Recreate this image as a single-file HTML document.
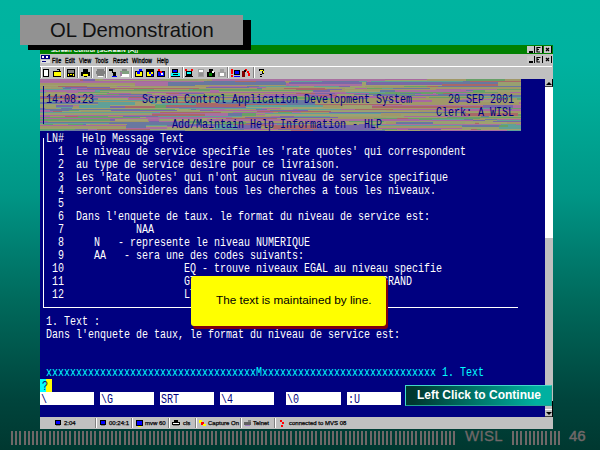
<!DOCTYPE html><html><head><meta charset="utf-8"><style>
*{margin:0;padding:0;box-sizing:border-box}
html,body{width:600px;height:450px;overflow:hidden}
body{position:relative;background:linear-gradient(180deg,#00b4a0 0px,#00b2a0 60px,#00ac98 100px,#009686 194px,#007e70 250px,#006a5c 300px,#00443c 400px,#003830 450px);font-family:"Liberation Sans",sans-serif}
.a{position:absolute}
.t{position:absolute;font:12px/12px "Liberation Mono",monospace;white-space:pre;transform:scale(0.8333,1.0);transform-origin:0 0}
</style></head><body>

<div class="a" style="left:40px;top:45px;width:513px;height:384px;background:#c0c0c0"></div>
<div class="a" style="left:40px;top:45px;width:513px;height:9px;background:#008000"></div>
<div class="a" style="left:40px;top:66px;width:512px;height:1px;background:#fff"></div>
<div class="a" style="left:40px;top:79px;width:505px;height:338px;background:#000080"></div>
<svg style="position:absolute;left:40px;top:79px" width="481" height="52"><rect x="0" y="0" width="40" height="1" fill="#a870a0"/><rect x="40" y="0" width="3" height="1" fill="#a86868"/><rect x="43" y="0" width="12" height="1" fill="#7868a8"/><rect x="55" y="0" width="4" height="1" fill="#a09868"/><rect x="59" y="0" width="4" height="1" fill="#98a070"/><rect x="63" y="0" width="58" height="1" fill="#a870a0"/><rect x="121" y="0" width="37" height="1" fill="#98a070"/><rect x="158" y="0" width="9" height="1" fill="#a0a070"/><rect x="167" y="0" width="5" height="1" fill="#a0a070"/><rect x="172" y="0" width="69" height="1" fill="#a870a0"/><rect x="241" y="0" width="104" height="1" fill="#a870a0"/><rect x="345" y="0" width="42" height="1" fill="#a868a0"/><rect x="387" y="0" width="12" height="1" fill="#a09868"/><rect x="399" y="0" width="27" height="1" fill="#a09868"/><rect x="426" y="0" width="39" height="1" fill="#68a068"/><rect x="465" y="0" width="16" height="1" fill="#a09868"/><rect x="0" y="1" width="40" height="1" fill="#a870a0"/><rect x="40" y="1" width="3" height="1" fill="#a86868"/><rect x="43" y="1" width="12" height="1" fill="#7868a8"/><rect x="55" y="1" width="4" height="1" fill="#a09868"/><rect x="59" y="1" width="4" height="1" fill="#98a070"/><rect x="63" y="1" width="58" height="1" fill="#a0a070"/><rect x="121" y="1" width="37" height="1" fill="#98a070"/><rect x="158" y="1" width="9" height="1" fill="#a0a070"/><rect x="167" y="1" width="5" height="1" fill="#a09868"/><rect x="172" y="1" width="69" height="1" fill="#a870a0"/><rect x="241" y="1" width="104" height="1" fill="#a870a0"/><rect x="345" y="1" width="42" height="1" fill="#a0a070"/><rect x="387" y="1" width="12" height="1" fill="#a09868"/><rect x="399" y="1" width="27" height="1" fill="#a09868"/><rect x="426" y="1" width="39" height="1" fill="#68a068"/><rect x="465" y="1" width="16" height="1" fill="#a09868"/><rect x="0" y="2" width="12" height="1" fill="#a868a0"/><rect x="12" y="2" width="119" height="1" fill="#a868a0"/><rect x="131" y="2" width="33" height="1" fill="#a870a0"/><rect x="164" y="2" width="31" height="1" fill="#6878a0"/><rect x="195" y="2" width="21" height="1" fill="#a86868"/><rect x="216" y="2" width="29" height="1" fill="#7868a8"/><rect x="245" y="2" width="6" height="1" fill="#a09868"/><rect x="251" y="2" width="9" height="1" fill="#60a098"/><rect x="260" y="2" width="22" height="1" fill="#60a098"/><rect x="282" y="2" width="37" height="1" fill="#6878a0"/><rect x="319" y="2" width="8" height="1" fill="#60a098"/><rect x="327" y="2" width="4" height="1" fill="#a870a0"/><rect x="331" y="2" width="92" height="1" fill="#60a098"/><rect x="423" y="2" width="7" height="1" fill="#6878a0"/><rect x="430" y="2" width="51" height="1" fill="#a86868"/><rect x="0" y="3" width="95" height="1" fill="#a870a0"/><rect x="95" y="3" width="33" height="1" fill="#a870a0"/><rect x="128" y="3" width="27" height="1" fill="#6878a0"/><rect x="155" y="3" width="91" height="1" fill="#6878a0"/><rect x="246" y="3" width="3" height="1" fill="#a09868"/><rect x="249" y="3" width="73" height="1" fill="#7868a8"/><rect x="322" y="3" width="4" height="1" fill="#a0a070"/><rect x="326" y="3" width="76" height="1" fill="#7868a8"/><rect x="402" y="3" width="56" height="1" fill="#6878a0"/><rect x="458" y="3" width="23" height="1" fill="#98a070"/><rect x="0" y="4" width="95" height="1" fill="#a09868"/><rect x="95" y="4" width="33" height="1" fill="#a870a0"/><rect x="128" y="4" width="27" height="1" fill="#6878a0"/><rect x="155" y="4" width="91" height="1" fill="#6878a0"/><rect x="246" y="4" width="3" height="1" fill="#a868a0"/><rect x="249" y="4" width="73" height="1" fill="#7868a8"/><rect x="322" y="4" width="4" height="1" fill="#a0a070"/><rect x="326" y="4" width="76" height="1" fill="#7868a8"/><rect x="402" y="4" width="56" height="1" fill="#6878a0"/><rect x="458" y="4" width="23" height="1" fill="#98a070"/><rect x="0" y="5" width="95" height="1" fill="#a09868"/><rect x="95" y="5" width="33" height="1" fill="#a870a0"/><rect x="128" y="5" width="27" height="1" fill="#6878a0"/><rect x="155" y="5" width="91" height="1" fill="#6878a0"/><rect x="246" y="5" width="3" height="1" fill="#a868a0"/><rect x="249" y="5" width="73" height="1" fill="#a870a0"/><rect x="322" y="5" width="4" height="1" fill="#a0a070"/><rect x="326" y="5" width="76" height="1" fill="#7868a8"/><rect x="402" y="5" width="56" height="1" fill="#a86868"/><rect x="458" y="5" width="23" height="1" fill="#98a070"/><rect x="0" y="6" width="95" height="1" fill="#a0a070"/><rect x="95" y="6" width="33" height="1" fill="#a870a0"/><rect x="128" y="6" width="27" height="1" fill="#6878a0"/><rect x="155" y="6" width="91" height="1" fill="#a09868"/><rect x="246" y="6" width="3" height="1" fill="#a868a0"/><rect x="249" y="6" width="73" height="1" fill="#a870a0"/><rect x="322" y="6" width="4" height="1" fill="#a0a070"/><rect x="326" y="6" width="76" height="1" fill="#a0a070"/><rect x="402" y="6" width="56" height="1" fill="#a86868"/><rect x="458" y="6" width="23" height="1" fill="#98a070"/><rect x="0" y="7" width="18" height="1" fill="#a09868"/><rect x="18" y="7" width="29" height="1" fill="#a86868"/><rect x="47" y="7" width="8" height="1" fill="#a09868"/><rect x="55" y="7" width="10" height="1" fill="#a09868"/><rect x="65" y="7" width="12" height="1" fill="#a09868"/><rect x="77" y="7" width="13" height="1" fill="#a870a0"/><rect x="90" y="7" width="79" height="1" fill="#a09868"/><rect x="169" y="7" width="38" height="1" fill="#a870a0"/><rect x="207" y="7" width="12" height="1" fill="#6878a0"/><rect x="219" y="7" width="40" height="1" fill="#60a098"/><rect x="259" y="7" width="5" height="1" fill="#98a070"/><rect x="264" y="7" width="10" height="1" fill="#98a070"/><rect x="274" y="7" width="25" height="1" fill="#60a098"/><rect x="299" y="7" width="11" height="1" fill="#7868a8"/><rect x="310" y="7" width="15" height="1" fill="#a0a070"/><rect x="325" y="7" width="39" height="1" fill="#a09868"/><rect x="364" y="7" width="6" height="1" fill="#68a068"/><rect x="370" y="7" width="17" height="1" fill="#68a068"/><rect x="387" y="7" width="11" height="1" fill="#a86868"/><rect x="398" y="7" width="83" height="1" fill="#6878a0"/><rect x="0" y="8" width="11" height="1" fill="#a0a070"/><rect x="11" y="8" width="11" height="1" fill="#98a070"/><rect x="22" y="8" width="3" height="1" fill="#60a098"/><rect x="25" y="8" width="45" height="1" fill="#7868a8"/><rect x="70" y="8" width="96" height="1" fill="#a0a070"/><rect x="166" y="8" width="43" height="1" fill="#7868a8"/><rect x="209" y="8" width="6" height="1" fill="#a868a0"/><rect x="215" y="8" width="11" height="1" fill="#a868a0"/><rect x="226" y="8" width="108" height="1" fill="#98a070"/><rect x="334" y="8" width="16" height="1" fill="#a09868"/><rect x="350" y="8" width="91" height="1" fill="#a09868"/><rect x="441" y="8" width="40" height="1" fill="#a09868"/><rect x="0" y="9" width="23" height="1" fill="#a09868"/><rect x="23" y="9" width="8" height="1" fill="#6878a0"/><rect x="31" y="9" width="16" height="1" fill="#a868a0"/><rect x="47" y="9" width="112" height="1" fill="#a86868"/><rect x="159" y="9" width="18" height="1" fill="#a09868"/><rect x="177" y="9" width="40" height="1" fill="#a09868"/><rect x="217" y="9" width="5" height="1" fill="#6878a0"/><rect x="222" y="9" width="22" height="1" fill="#a09868"/><rect x="244" y="9" width="41" height="1" fill="#a86868"/><rect x="285" y="9" width="20" height="1" fill="#a09868"/><rect x="305" y="9" width="10" height="1" fill="#a0a070"/><rect x="315" y="9" width="12" height="1" fill="#a868a0"/><rect x="327" y="9" width="15" height="1" fill="#68a068"/><rect x="342" y="9" width="11" height="1" fill="#60a098"/><rect x="353" y="9" width="37" height="1" fill="#6878a0"/><rect x="390" y="9" width="91" height="1" fill="#a09868"/><rect x="0" y="10" width="37" height="1" fill="#60a098"/><rect x="37" y="10" width="38" height="1" fill="#7868a8"/><rect x="75" y="10" width="13" height="1" fill="#98a070"/><rect x="88" y="10" width="6" height="1" fill="#a09868"/><rect x="94" y="10" width="20" height="1" fill="#68a068"/><rect x="114" y="10" width="35" height="1" fill="#a09868"/><rect x="149" y="10" width="4" height="1" fill="#60a098"/><rect x="153" y="10" width="69" height="1" fill="#68a068"/><rect x="222" y="10" width="34" height="1" fill="#a09868"/><rect x="256" y="10" width="31" height="1" fill="#a86868"/><rect x="287" y="10" width="15" height="1" fill="#7868a8"/><rect x="302" y="10" width="94" height="1" fill="#a09868"/><rect x="396" y="10" width="25" height="1" fill="#a868a0"/><rect x="421" y="10" width="36" height="1" fill="#a870a0"/><rect x="457" y="10" width="24" height="1" fill="#68a068"/><rect x="0" y="11" width="55" height="1" fill="#a870a0"/><rect x="55" y="11" width="5" height="1" fill="#60a098"/><rect x="60" y="11" width="110" height="1" fill="#68a068"/><rect x="170" y="11" width="9" height="1" fill="#a870a0"/><rect x="179" y="11" width="94" height="1" fill="#68a068"/><rect x="273" y="11" width="17" height="1" fill="#7868a8"/><rect x="290" y="11" width="15" height="1" fill="#a09868"/><rect x="305" y="11" width="18" height="1" fill="#a0a070"/><rect x="323" y="11" width="17" height="1" fill="#a09868"/><rect x="340" y="11" width="15" height="1" fill="#6878a0"/><rect x="355" y="11" width="65" height="1" fill="#a870a0"/><rect x="420" y="11" width="6" height="1" fill="#a868a0"/><rect x="426" y="11" width="7" height="1" fill="#6878a0"/><rect x="433" y="11" width="12" height="1" fill="#68a068"/><rect x="445" y="11" width="7" height="1" fill="#98a070"/><rect x="452" y="11" width="29" height="1" fill="#98a070"/><rect x="0" y="12" width="55" height="1" fill="#a870a0"/><rect x="55" y="12" width="5" height="1" fill="#60a098"/><rect x="60" y="12" width="110" height="1" fill="#98a070"/><rect x="170" y="12" width="9" height="1" fill="#a870a0"/><rect x="179" y="12" width="94" height="1" fill="#a0a070"/><rect x="273" y="12" width="17" height="1" fill="#7868a8"/><rect x="290" y="12" width="15" height="1" fill="#a09868"/><rect x="305" y="12" width="18" height="1" fill="#a0a070"/><rect x="323" y="12" width="17" height="1" fill="#a0a070"/><rect x="340" y="12" width="15" height="1" fill="#6878a0"/><rect x="355" y="12" width="65" height="1" fill="#a870a0"/><rect x="420" y="12" width="6" height="1" fill="#a868a0"/><rect x="426" y="12" width="7" height="1" fill="#a870a0"/><rect x="433" y="12" width="12" height="1" fill="#68a068"/><rect x="445" y="12" width="7" height="1" fill="#98a070"/><rect x="452" y="12" width="29" height="1" fill="#98a070"/><rect x="0" y="13" width="6" height="1" fill="#60a098"/><rect x="6" y="13" width="21" height="1" fill="#a09868"/><rect x="27" y="13" width="11" height="1" fill="#a870a0"/><rect x="38" y="13" width="31" height="1" fill="#68a068"/><rect x="69" y="13" width="38" height="1" fill="#a0a070"/><rect x="107" y="13" width="114" height="1" fill="#a868a0"/><rect x="221" y="13" width="33" height="1" fill="#a868a0"/><rect x="254" y="13" width="7" height="1" fill="#a870a0"/><rect x="261" y="13" width="10" height="1" fill="#a09868"/><rect x="271" y="13" width="35" height="1" fill="#a870a0"/><rect x="306" y="13" width="39" height="1" fill="#60a098"/><rect x="345" y="13" width="113" height="1" fill="#68a068"/><rect x="458" y="13" width="12" height="1" fill="#a09868"/><rect x="470" y="13" width="11" height="1" fill="#a868a0"/><rect x="0" y="14" width="67" height="1" fill="#a0a070"/><rect x="67" y="14" width="24" height="1" fill="#a868a0"/><rect x="91" y="14" width="11" height="1" fill="#a09868"/><rect x="102" y="14" width="3" height="1" fill="#a0a070"/><rect x="105" y="14" width="10" height="1" fill="#a09868"/><rect x="115" y="14" width="4" height="1" fill="#a0a070"/><rect x="119" y="14" width="7" height="1" fill="#98a070"/><rect x="126" y="14" width="13" height="1" fill="#a86868"/><rect x="139" y="14" width="25" height="1" fill="#7868a8"/><rect x="164" y="14" width="92" height="1" fill="#a09868"/><rect x="256" y="14" width="19" height="1" fill="#a86868"/><rect x="275" y="14" width="20" height="1" fill="#7868a8"/><rect x="295" y="14" width="34" height="1" fill="#a868a0"/><rect x="329" y="14" width="31" height="1" fill="#68a068"/><rect x="360" y="14" width="21" height="1" fill="#6878a0"/><rect x="381" y="14" width="12" height="1" fill="#68a068"/><rect x="393" y="14" width="3" height="1" fill="#a870a0"/><rect x="396" y="14" width="7" height="1" fill="#68a068"/><rect x="403" y="14" width="9" height="1" fill="#a86868"/><rect x="412" y="14" width="15" height="1" fill="#a870a0"/><rect x="427" y="14" width="54" height="1" fill="#a09868"/><rect x="0" y="15" width="39" height="1" fill="#98a070"/><rect x="39" y="15" width="14" height="1" fill="#a09868"/><rect x="53" y="15" width="3" height="1" fill="#60a098"/><rect x="56" y="15" width="23" height="1" fill="#68a068"/><rect x="79" y="15" width="33" height="1" fill="#6878a0"/><rect x="112" y="15" width="17" height="1" fill="#a0a070"/><rect x="129" y="15" width="13" height="1" fill="#a870a0"/><rect x="142" y="15" width="56" height="1" fill="#a09868"/><rect x="198" y="15" width="17" height="1" fill="#a09868"/><rect x="215" y="15" width="9" height="1" fill="#a09868"/><rect x="224" y="15" width="73" height="1" fill="#a868a0"/><rect x="297" y="15" width="17" height="1" fill="#98a070"/><rect x="314" y="15" width="32" height="1" fill="#6878a0"/><rect x="346" y="15" width="9" height="1" fill="#6878a0"/><rect x="355" y="15" width="20" height="1" fill="#68a068"/><rect x="375" y="15" width="12" height="1" fill="#a870a0"/><rect x="387" y="15" width="11" height="1" fill="#a868a0"/><rect x="398" y="15" width="38" height="1" fill="#6878a0"/><rect x="436" y="15" width="24" height="1" fill="#7868a8"/><rect x="460" y="15" width="21" height="1" fill="#a09868"/><rect x="0" y="16" width="10" height="1" fill="#a0a070"/><rect x="10" y="16" width="10" height="1" fill="#a09868"/><rect x="20" y="16" width="96" height="1" fill="#a868a0"/><rect x="116" y="16" width="32" height="1" fill="#a868a0"/><rect x="148" y="16" width="11" height="1" fill="#60a098"/><rect x="159" y="16" width="34" height="1" fill="#68a068"/><rect x="193" y="16" width="62" height="1" fill="#a870a0"/><rect x="255" y="16" width="9" height="1" fill="#a868a0"/><rect x="264" y="16" width="7" height="1" fill="#6878a0"/><rect x="271" y="16" width="7" height="1" fill="#7868a8"/><rect x="278" y="16" width="19" height="1" fill="#a86868"/><rect x="297" y="16" width="36" height="1" fill="#a0a070"/><rect x="333" y="16" width="6" height="1" fill="#6878a0"/><rect x="339" y="16" width="14" height="1" fill="#7868a8"/><rect x="353" y="16" width="116" height="1" fill="#6878a0"/><rect x="469" y="16" width="12" height="1" fill="#6878a0"/><rect x="0" y="17" width="34" height="1" fill="#a86868"/><rect x="34" y="17" width="76" height="1" fill="#6878a0"/><rect x="110" y="17" width="67" height="1" fill="#a0a070"/><rect x="177" y="17" width="4" height="1" fill="#68a068"/><rect x="181" y="17" width="15" height="1" fill="#a09868"/><rect x="196" y="17" width="6" height="1" fill="#98a070"/><rect x="202" y="17" width="10" height="1" fill="#a09868"/><rect x="212" y="17" width="9" height="1" fill="#98a070"/><rect x="221" y="17" width="5" height="1" fill="#a09868"/><rect x="226" y="17" width="29" height="1" fill="#7868a8"/><rect x="255" y="17" width="11" height="1" fill="#a09868"/><rect x="266" y="17" width="70" height="1" fill="#a868a0"/><rect x="336" y="17" width="39" height="1" fill="#a09868"/><rect x="375" y="17" width="97" height="1" fill="#a09868"/><rect x="472" y="17" width="9" height="1" fill="#6878a0"/><rect x="0" y="18" width="8" height="1" fill="#7868a8"/><rect x="8" y="18" width="18" height="1" fill="#6878a0"/><rect x="26" y="18" width="27" height="1" fill="#a86868"/><rect x="53" y="18" width="36" height="1" fill="#a868a0"/><rect x="89" y="18" width="3" height="1" fill="#a86868"/><rect x="92" y="18" width="11" height="1" fill="#a86868"/><rect x="103" y="18" width="8" height="1" fill="#a870a0"/><rect x="111" y="18" width="17" height="1" fill="#7868a8"/><rect x="128" y="18" width="9" height="1" fill="#7868a8"/><rect x="137" y="18" width="38" height="1" fill="#a86868"/><rect x="175" y="18" width="72" height="1" fill="#7868a8"/><rect x="247" y="18" width="33" height="1" fill="#68a068"/><rect x="280" y="18" width="106" height="1" fill="#a868a0"/><rect x="386" y="18" width="3" height="1" fill="#a09868"/><rect x="389" y="18" width="40" height="1" fill="#68a068"/><rect x="429" y="18" width="9" height="1" fill="#a09868"/><rect x="438" y="18" width="43" height="1" fill="#60a098"/><rect x="0" y="19" width="37" height="1" fill="#a86868"/><rect x="37" y="19" width="15" height="1" fill="#a0a070"/><rect x="52" y="19" width="6" height="1" fill="#6878a0"/><rect x="58" y="19" width="30" height="1" fill="#a0a070"/><rect x="88" y="19" width="20" height="1" fill="#a868a0"/><rect x="108" y="19" width="4" height="1" fill="#a09868"/><rect x="112" y="19" width="93" height="1" fill="#a09868"/><rect x="205" y="19" width="17" height="1" fill="#a09868"/><rect x="222" y="19" width="12" height="1" fill="#a0a070"/><rect x="234" y="19" width="31" height="1" fill="#68a068"/><rect x="265" y="19" width="28" height="1" fill="#68a068"/><rect x="293" y="19" width="18" height="1" fill="#a09868"/><rect x="311" y="19" width="5" height="1" fill="#68a068"/><rect x="316" y="19" width="12" height="1" fill="#6878a0"/><rect x="328" y="19" width="94" height="1" fill="#a09868"/><rect x="422" y="19" width="42" height="1" fill="#a09868"/><rect x="464" y="19" width="13" height="1" fill="#a09868"/><rect x="477" y="19" width="4" height="1" fill="#68a068"/><rect x="0" y="20" width="37" height="1" fill="#98a070"/><rect x="37" y="20" width="15" height="1" fill="#a0a070"/><rect x="52" y="20" width="6" height="1" fill="#6878a0"/><rect x="58" y="20" width="30" height="1" fill="#a0a070"/><rect x="88" y="20" width="20" height="1" fill="#a868a0"/><rect x="108" y="20" width="4" height="1" fill="#a09868"/><rect x="112" y="20" width="93" height="1" fill="#a09868"/><rect x="205" y="20" width="17" height="1" fill="#a870a0"/><rect x="222" y="20" width="12" height="1" fill="#a0a070"/><rect x="234" y="20" width="31" height="1" fill="#98a070"/><rect x="265" y="20" width="28" height="1" fill="#68a068"/><rect x="293" y="20" width="18" height="1" fill="#a09868"/><rect x="311" y="20" width="5" height="1" fill="#a86868"/><rect x="316" y="20" width="12" height="1" fill="#a09868"/><rect x="328" y="20" width="94" height="1" fill="#a09868"/><rect x="422" y="20" width="42" height="1" fill="#a870a0"/><rect x="464" y="20" width="13" height="1" fill="#a09868"/><rect x="477" y="20" width="4" height="1" fill="#68a068"/><rect x="0" y="21" width="9" height="1" fill="#98a070"/><rect x="9" y="21" width="7" height="1" fill="#a09868"/><rect x="16" y="21" width="25" height="1" fill="#a868a0"/><rect x="41" y="21" width="114" height="1" fill="#60a098"/><rect x="155" y="21" width="41" height="1" fill="#60a098"/><rect x="196" y="21" width="32" height="1" fill="#68a068"/><rect x="228" y="21" width="13" height="1" fill="#68a068"/><rect x="241" y="21" width="28" height="1" fill="#6878a0"/><rect x="269" y="21" width="76" height="1" fill="#a09868"/><rect x="345" y="21" width="9" height="1" fill="#7868a8"/><rect x="354" y="21" width="38" height="1" fill="#a868a0"/><rect x="392" y="21" width="22" height="1" fill="#a09868"/><rect x="414" y="21" width="15" height="1" fill="#7868a8"/><rect x="429" y="21" width="14" height="1" fill="#a868a0"/><rect x="443" y="21" width="38" height="1" fill="#a0a070"/><rect x="0" y="22" width="9" height="1" fill="#98a070"/><rect x="9" y="22" width="7" height="1" fill="#60a098"/><rect x="16" y="22" width="25" height="1" fill="#a868a0"/><rect x="41" y="22" width="114" height="1" fill="#a09868"/><rect x="155" y="22" width="41" height="1" fill="#60a098"/><rect x="196" y="22" width="32" height="1" fill="#68a068"/><rect x="228" y="22" width="13" height="1" fill="#68a068"/><rect x="241" y="22" width="28" height="1" fill="#6878a0"/><rect x="269" y="22" width="76" height="1" fill="#a09868"/><rect x="345" y="22" width="9" height="1" fill="#a09868"/><rect x="354" y="22" width="38" height="1" fill="#a868a0"/><rect x="392" y="22" width="22" height="1" fill="#a09868"/><rect x="414" y="22" width="15" height="1" fill="#7868a8"/><rect x="429" y="22" width="14" height="1" fill="#98a070"/><rect x="443" y="22" width="38" height="1" fill="#a0a070"/><rect x="0" y="23" width="58" height="1" fill="#6878a0"/><rect x="58" y="23" width="37" height="1" fill="#60a098"/><rect x="95" y="23" width="16" height="1" fill="#a0a070"/><rect x="111" y="23" width="5" height="1" fill="#60a098"/><rect x="116" y="23" width="6" height="1" fill="#a0a070"/><rect x="122" y="23" width="34" height="1" fill="#a86868"/><rect x="156" y="23" width="22" height="1" fill="#a0a070"/><rect x="178" y="23" width="69" height="1" fill="#6878a0"/><rect x="247" y="23" width="28" height="1" fill="#6878a0"/><rect x="275" y="23" width="87" height="1" fill="#a09868"/><rect x="362" y="23" width="30" height="1" fill="#a09868"/><rect x="392" y="23" width="87" height="1" fill="#a09868"/><rect x="479" y="23" width="2" height="1" fill="#a868a0"/><rect x="0" y="24" width="58" height="1" fill="#6878a0"/><rect x="58" y="24" width="37" height="1" fill="#60a098"/><rect x="95" y="24" width="16" height="1" fill="#a0a070"/><rect x="111" y="24" width="5" height="1" fill="#60a098"/><rect x="116" y="24" width="6" height="1" fill="#a0a070"/><rect x="122" y="24" width="34" height="1" fill="#60a098"/><rect x="156" y="24" width="22" height="1" fill="#a86868"/><rect x="178" y="24" width="69" height="1" fill="#6878a0"/><rect x="247" y="24" width="28" height="1" fill="#6878a0"/><rect x="275" y="24" width="87" height="1" fill="#a0a070"/><rect x="362" y="24" width="30" height="1" fill="#a09868"/><rect x="392" y="24" width="87" height="1" fill="#a09868"/><rect x="479" y="24" width="2" height="1" fill="#a868a0"/><rect x="0" y="25" width="58" height="1" fill="#98a070"/><rect x="58" y="25" width="37" height="1" fill="#60a098"/><rect x="95" y="25" width="16" height="1" fill="#a0a070"/><rect x="111" y="25" width="5" height="1" fill="#a09868"/><rect x="116" y="25" width="6" height="1" fill="#60a098"/><rect x="122" y="25" width="34" height="1" fill="#60a098"/><rect x="156" y="25" width="22" height="1" fill="#a86868"/><rect x="178" y="25" width="69" height="1" fill="#a86868"/><rect x="247" y="25" width="28" height="1" fill="#6878a0"/><rect x="275" y="25" width="87" height="1" fill="#a86868"/><rect x="362" y="25" width="30" height="1" fill="#a09868"/><rect x="392" y="25" width="87" height="1" fill="#a09868"/><rect x="479" y="25" width="2" height="1" fill="#a0a070"/><rect x="0" y="26" width="16" height="1" fill="#98a070"/><rect x="16" y="26" width="17" height="1" fill="#7868a8"/><rect x="33" y="26" width="6" height="1" fill="#a870a0"/><rect x="39" y="26" width="31" height="1" fill="#60a098"/><rect x="70" y="26" width="15" height="1" fill="#a0a070"/><rect x="85" y="26" width="30" height="1" fill="#a0a070"/><rect x="115" y="26" width="11" height="1" fill="#68a068"/><rect x="126" y="26" width="80" height="1" fill="#a86868"/><rect x="206" y="26" width="77" height="1" fill="#60a098"/><rect x="283" y="26" width="20" height="1" fill="#a09868"/><rect x="303" y="26" width="29" height="1" fill="#a0a070"/><rect x="332" y="26" width="111" height="1" fill="#a870a0"/><rect x="443" y="26" width="30" height="1" fill="#7868a8"/><rect x="473" y="26" width="8" height="1" fill="#a870a0"/><rect x="0" y="27" width="16" height="1" fill="#98a070"/><rect x="16" y="27" width="17" height="1" fill="#7868a8"/><rect x="33" y="27" width="6" height="1" fill="#a09868"/><rect x="39" y="27" width="31" height="1" fill="#60a098"/><rect x="70" y="27" width="15" height="1" fill="#7868a8"/><rect x="85" y="27" width="30" height="1" fill="#a86868"/><rect x="115" y="27" width="11" height="1" fill="#68a068"/><rect x="126" y="27" width="80" height="1" fill="#a86868"/><rect x="206" y="27" width="77" height="1" fill="#60a098"/><rect x="283" y="27" width="20" height="1" fill="#a09868"/><rect x="303" y="27" width="29" height="1" fill="#a0a070"/><rect x="332" y="27" width="111" height="1" fill="#a86868"/><rect x="443" y="27" width="30" height="1" fill="#7868a8"/><rect x="473" y="27" width="8" height="1" fill="#a870a0"/><rect x="0" y="28" width="16" height="1" fill="#98a070"/><rect x="16" y="28" width="17" height="1" fill="#60a098"/><rect x="33" y="28" width="6" height="1" fill="#a09868"/><rect x="39" y="28" width="31" height="1" fill="#60a098"/><rect x="70" y="28" width="15" height="1" fill="#7868a8"/><rect x="85" y="28" width="30" height="1" fill="#a86868"/><rect x="115" y="28" width="11" height="1" fill="#68a068"/><rect x="126" y="28" width="80" height="1" fill="#7868a8"/><rect x="206" y="28" width="77" height="1" fill="#a0a070"/><rect x="283" y="28" width="20" height="1" fill="#a09868"/><rect x="303" y="28" width="29" height="1" fill="#a0a070"/><rect x="332" y="28" width="111" height="1" fill="#a86868"/><rect x="443" y="28" width="30" height="1" fill="#7868a8"/><rect x="473" y="28" width="8" height="1" fill="#a870a0"/><rect x="0" y="29" width="5" height="1" fill="#7868a8"/><rect x="5" y="29" width="11" height="1" fill="#a09868"/><rect x="16" y="29" width="5" height="1" fill="#98a070"/><rect x="21" y="29" width="11" height="1" fill="#6878a0"/><rect x="32" y="29" width="107" height="1" fill="#a0a070"/><rect x="139" y="29" width="83" height="1" fill="#60a098"/><rect x="222" y="29" width="19" height="1" fill="#a870a0"/><rect x="241" y="29" width="91" height="1" fill="#a0a070"/><rect x="332" y="29" width="85" height="1" fill="#a09868"/><rect x="417" y="29" width="33" height="1" fill="#60a098"/><rect x="450" y="29" width="6" height="1" fill="#a870a0"/><rect x="456" y="29" width="25" height="1" fill="#68a068"/><rect x="0" y="30" width="100" height="1" fill="#6878a0"/><rect x="100" y="30" width="35" height="1" fill="#68a068"/><rect x="135" y="30" width="13" height="1" fill="#a0a070"/><rect x="148" y="30" width="3" height="1" fill="#a09868"/><rect x="151" y="30" width="5" height="1" fill="#6878a0"/><rect x="156" y="30" width="29" height="1" fill="#a870a0"/><rect x="185" y="30" width="31" height="1" fill="#a09868"/><rect x="216" y="30" width="11" height="1" fill="#6878a0"/><rect x="227" y="30" width="17" height="1" fill="#a09868"/><rect x="244" y="30" width="9" height="1" fill="#98a070"/><rect x="253" y="30" width="5" height="1" fill="#a868a0"/><rect x="258" y="30" width="29" height="1" fill="#60a098"/><rect x="287" y="30" width="14" height="1" fill="#60a098"/><rect x="301" y="30" width="14" height="1" fill="#a868a0"/><rect x="315" y="30" width="38" height="1" fill="#a86868"/><rect x="353" y="30" width="98" height="1" fill="#a868a0"/><rect x="451" y="30" width="15" height="1" fill="#a09868"/><rect x="466" y="30" width="6" height="1" fill="#7868a8"/><rect x="472" y="30" width="9" height="1" fill="#a870a0"/><rect x="0" y="31" width="10" height="1" fill="#a870a0"/><rect x="10" y="31" width="19" height="1" fill="#6878a0"/><rect x="29" y="31" width="10" height="1" fill="#68a068"/><rect x="39" y="31" width="32" height="1" fill="#98a070"/><rect x="71" y="31" width="66" height="1" fill="#7868a8"/><rect x="137" y="31" width="23" height="1" fill="#a0a070"/><rect x="160" y="31" width="13" height="1" fill="#7868a8"/><rect x="173" y="31" width="57" height="1" fill="#a868a0"/><rect x="230" y="31" width="12" height="1" fill="#6878a0"/><rect x="242" y="31" width="26" height="1" fill="#7868a8"/><rect x="268" y="31" width="3" height="1" fill="#a09868"/><rect x="271" y="31" width="35" height="1" fill="#98a070"/><rect x="306" y="31" width="40" height="1" fill="#98a070"/><rect x="346" y="31" width="57" height="1" fill="#a09868"/><rect x="403" y="31" width="44" height="1" fill="#a868a0"/><rect x="447" y="31" width="34" height="1" fill="#a868a0"/><rect x="0" y="32" width="13" height="1" fill="#a868a0"/><rect x="13" y="32" width="9" height="1" fill="#a86868"/><rect x="22" y="32" width="19" height="1" fill="#a0a070"/><rect x="41" y="32" width="78" height="1" fill="#a09868"/><rect x="119" y="32" width="98" height="1" fill="#98a070"/><rect x="217" y="32" width="74" height="1" fill="#a86868"/><rect x="291" y="32" width="87" height="1" fill="#a0a070"/><rect x="378" y="32" width="20" height="1" fill="#a09868"/><rect x="398" y="32" width="62" height="1" fill="#a09868"/><rect x="460" y="32" width="21" height="1" fill="#a09868"/><rect x="0" y="33" width="120" height="1" fill="#60a098"/><rect x="120" y="33" width="61" height="1" fill="#a86868"/><rect x="181" y="33" width="12" height="1" fill="#a09868"/><rect x="193" y="33" width="40" height="1" fill="#a868a0"/><rect x="233" y="33" width="5" height="1" fill="#a09868"/><rect x="238" y="33" width="14" height="1" fill="#68a068"/><rect x="252" y="33" width="9" height="1" fill="#a870a0"/><rect x="261" y="33" width="18" height="1" fill="#a09868"/><rect x="279" y="33" width="10" height="1" fill="#a09868"/><rect x="289" y="33" width="30" height="1" fill="#7868a8"/><rect x="319" y="33" width="107" height="1" fill="#6878a0"/><rect x="426" y="33" width="33" height="1" fill="#98a070"/><rect x="459" y="33" width="22" height="1" fill="#a09868"/><rect x="0" y="34" width="112" height="1" fill="#98a070"/><rect x="112" y="34" width="53" height="1" fill="#a868a0"/><rect x="165" y="34" width="23" height="1" fill="#a870a0"/><rect x="188" y="34" width="14" height="1" fill="#6878a0"/><rect x="202" y="34" width="14" height="1" fill="#68a068"/><rect x="216" y="34" width="9" height="1" fill="#98a070"/><rect x="225" y="34" width="116" height="1" fill="#60a098"/><rect x="341" y="34" width="20" height="1" fill="#a09868"/><rect x="361" y="34" width="62" height="1" fill="#a09868"/><rect x="423" y="34" width="55" height="1" fill="#a86868"/><rect x="478" y="34" width="3" height="1" fill="#a0a070"/><rect x="0" y="35" width="112" height="1" fill="#98a070"/><rect x="112" y="35" width="53" height="1" fill="#a86868"/><rect x="165" y="35" width="23" height="1" fill="#a870a0"/><rect x="188" y="35" width="14" height="1" fill="#6878a0"/><rect x="202" y="35" width="14" height="1" fill="#68a068"/><rect x="216" y="35" width="9" height="1" fill="#a870a0"/><rect x="225" y="35" width="116" height="1" fill="#a0a070"/><rect x="341" y="35" width="20" height="1" fill="#a09868"/><rect x="361" y="35" width="62" height="1" fill="#98a070"/><rect x="423" y="35" width="55" height="1" fill="#a86868"/><rect x="478" y="35" width="3" height="1" fill="#68a068"/><rect x="0" y="36" width="112" height="1" fill="#a868a0"/><rect x="112" y="36" width="53" height="1" fill="#a86868"/><rect x="165" y="36" width="23" height="1" fill="#a870a0"/><rect x="188" y="36" width="14" height="1" fill="#6878a0"/><rect x="202" y="36" width="14" height="1" fill="#68a068"/><rect x="216" y="36" width="9" height="1" fill="#a09868"/><rect x="225" y="36" width="116" height="1" fill="#a0a070"/><rect x="341" y="36" width="20" height="1" fill="#a09868"/><rect x="361" y="36" width="62" height="1" fill="#98a070"/><rect x="423" y="36" width="55" height="1" fill="#a86868"/><rect x="478" y="36" width="3" height="1" fill="#68a068"/><rect x="0" y="37" width="10" height="1" fill="#a868a0"/><rect x="10" y="37" width="15" height="1" fill="#a09868"/><rect x="25" y="37" width="13" height="1" fill="#a86868"/><rect x="38" y="37" width="30" height="1" fill="#68a068"/><rect x="68" y="37" width="15" height="1" fill="#a09868"/><rect x="83" y="37" width="35" height="1" fill="#6878a0"/><rect x="118" y="37" width="84" height="1" fill="#60a098"/><rect x="202" y="37" width="10" height="1" fill="#a09868"/><rect x="212" y="37" width="19" height="1" fill="#a09868"/><rect x="231" y="37" width="9" height="1" fill="#a870a0"/><rect x="240" y="37" width="14" height="1" fill="#7868a8"/><rect x="254" y="37" width="36" height="1" fill="#60a098"/><rect x="290" y="37" width="74" height="1" fill="#98a070"/><rect x="364" y="37" width="3" height="1" fill="#a868a0"/><rect x="367" y="37" width="62" height="1" fill="#a868a0"/><rect x="429" y="37" width="12" height="1" fill="#a09868"/><rect x="441" y="37" width="8" height="1" fill="#6878a0"/><rect x="449" y="37" width="32" height="1" fill="#98a070"/><rect x="0" y="38" width="100" height="1" fill="#68a068"/><rect x="100" y="38" width="6" height="1" fill="#a0a070"/><rect x="106" y="38" width="86" height="1" fill="#a868a0"/><rect x="192" y="38" width="13" height="1" fill="#a09868"/><rect x="205" y="38" width="93" height="1" fill="#7868a8"/><rect x="298" y="38" width="48" height="1" fill="#a09868"/><rect x="346" y="38" width="51" height="1" fill="#98a070"/><rect x="397" y="38" width="10" height="1" fill="#a09868"/><rect x="407" y="38" width="74" height="1" fill="#68a068"/><rect x="0" y="39" width="83" height="1" fill="#a868a0"/><rect x="83" y="39" width="76" height="1" fill="#a870a0"/><rect x="159" y="39" width="3" height="1" fill="#a870a0"/><rect x="162" y="39" width="14" height="1" fill="#a0a070"/><rect x="176" y="39" width="10" height="1" fill="#a09868"/><rect x="186" y="39" width="14" height="1" fill="#a86868"/><rect x="200" y="39" width="37" height="1" fill="#a86868"/><rect x="237" y="39" width="97" height="1" fill="#a09868"/><rect x="334" y="39" width="23" height="1" fill="#68a068"/><rect x="357" y="39" width="11" height="1" fill="#a86868"/><rect x="368" y="39" width="72" height="1" fill="#68a068"/><rect x="440" y="39" width="41" height="1" fill="#a09868"/><rect x="0" y="40" width="70" height="1" fill="#68a068"/><rect x="70" y="40" width="5" height="1" fill="#7868a8"/><rect x="75" y="40" width="33" height="1" fill="#a0a070"/><rect x="108" y="40" width="11" height="1" fill="#a868a0"/><rect x="119" y="40" width="11" height="1" fill="#98a070"/><rect x="130" y="40" width="37" height="1" fill="#a0a070"/><rect x="167" y="40" width="12" height="1" fill="#a870a0"/><rect x="179" y="40" width="118" height="1" fill="#a870a0"/><rect x="297" y="40" width="35" height="1" fill="#a870a0"/><rect x="332" y="40" width="10" height="1" fill="#a870a0"/><rect x="342" y="40" width="37" height="1" fill="#a868a0"/><rect x="379" y="40" width="13" height="1" fill="#68a068"/><rect x="392" y="40" width="32" height="1" fill="#60a098"/><rect x="424" y="40" width="9" height="1" fill="#6878a0"/><rect x="433" y="40" width="12" height="1" fill="#a09868"/><rect x="445" y="40" width="12" height="1" fill="#6878a0"/><rect x="457" y="40" width="24" height="1" fill="#a868a0"/><rect x="0" y="41" width="70" height="1" fill="#68a068"/><rect x="70" y="41" width="5" height="1" fill="#7868a8"/><rect x="75" y="41" width="33" height="1" fill="#a0a070"/><rect x="108" y="41" width="11" height="1" fill="#a868a0"/><rect x="119" y="41" width="11" height="1" fill="#98a070"/><rect x="130" y="41" width="37" height="1" fill="#a0a070"/><rect x="167" y="41" width="12" height="1" fill="#a870a0"/><rect x="179" y="41" width="118" height="1" fill="#a870a0"/><rect x="297" y="41" width="35" height="1" fill="#a870a0"/><rect x="332" y="41" width="10" height="1" fill="#a870a0"/><rect x="342" y="41" width="37" height="1" fill="#a868a0"/><rect x="379" y="41" width="13" height="1" fill="#a870a0"/><rect x="392" y="41" width="32" height="1" fill="#a868a0"/><rect x="424" y="41" width="9" height="1" fill="#a868a0"/><rect x="433" y="41" width="12" height="1" fill="#7868a8"/><rect x="445" y="41" width="12" height="1" fill="#98a070"/><rect x="457" y="41" width="24" height="1" fill="#60a098"/><rect x="0" y="42" width="8" height="1" fill="#a868a0"/><rect x="8" y="42" width="101" height="1" fill="#a09868"/><rect x="109" y="42" width="10" height="1" fill="#7868a8"/><rect x="119" y="42" width="31" height="1" fill="#a870a0"/><rect x="150" y="42" width="12" height="1" fill="#68a068"/><rect x="162" y="42" width="29" height="1" fill="#98a070"/><rect x="191" y="42" width="77" height="1" fill="#a09868"/><rect x="268" y="42" width="10" height="1" fill="#a868a0"/><rect x="278" y="42" width="8" height="1" fill="#a870a0"/><rect x="286" y="42" width="23" height="1" fill="#a09868"/><rect x="309" y="42" width="35" height="1" fill="#68a068"/><rect x="344" y="42" width="109" height="1" fill="#98a070"/><rect x="453" y="42" width="28" height="1" fill="#7868a8"/><rect x="0" y="43" width="69" height="1" fill="#6878a0"/><rect x="69" y="43" width="79" height="1" fill="#6878a0"/><rect x="148" y="43" width="34" height="1" fill="#68a068"/><rect x="182" y="43" width="10" height="1" fill="#68a068"/><rect x="192" y="43" width="9" height="1" fill="#68a068"/><rect x="201" y="43" width="5" height="1" fill="#68a068"/><rect x="206" y="43" width="100" height="1" fill="#a09868"/><rect x="306" y="43" width="40" height="1" fill="#a0a070"/><rect x="346" y="43" width="10" height="1" fill="#a09868"/><rect x="356" y="43" width="37" height="1" fill="#6878a0"/><rect x="393" y="43" width="32" height="1" fill="#98a070"/><rect x="425" y="43" width="10" height="1" fill="#a0a070"/><rect x="435" y="43" width="4" height="1" fill="#a09868"/><rect x="439" y="43" width="28" height="1" fill="#a0a070"/><rect x="467" y="43" width="14" height="1" fill="#a09868"/><rect x="0" y="44" width="69" height="1" fill="#60a098"/><rect x="69" y="44" width="79" height="1" fill="#6878a0"/><rect x="148" y="44" width="34" height="1" fill="#98a070"/><rect x="182" y="44" width="10" height="1" fill="#68a068"/><rect x="192" y="44" width="9" height="1" fill="#68a068"/><rect x="201" y="44" width="5" height="1" fill="#68a068"/><rect x="206" y="44" width="100" height="1" fill="#7868a8"/><rect x="306" y="44" width="40" height="1" fill="#a0a070"/><rect x="346" y="44" width="10" height="1" fill="#a09868"/><rect x="356" y="44" width="37" height="1" fill="#6878a0"/><rect x="393" y="44" width="32" height="1" fill="#98a070"/><rect x="425" y="44" width="10" height="1" fill="#a0a070"/><rect x="435" y="44" width="4" height="1" fill="#a86868"/><rect x="439" y="44" width="28" height="1" fill="#a0a070"/><rect x="467" y="44" width="14" height="1" fill="#a09868"/><rect x="0" y="45" width="3" height="1" fill="#98a070"/><rect x="3" y="45" width="10" height="1" fill="#68a068"/><rect x="13" y="45" width="15" height="1" fill="#a09868"/><rect x="28" y="45" width="15" height="1" fill="#68a068"/><rect x="43" y="45" width="3" height="1" fill="#6878a0"/><rect x="46" y="45" width="4" height="1" fill="#a0a070"/><rect x="50" y="45" width="37" height="1" fill="#a09868"/><rect x="87" y="45" width="106" height="1" fill="#6878a0"/><rect x="193" y="45" width="32" height="1" fill="#a86868"/><rect x="225" y="45" width="12" height="1" fill="#a870a0"/><rect x="237" y="45" width="22" height="1" fill="#60a098"/><rect x="259" y="45" width="60" height="1" fill="#a09868"/><rect x="319" y="45" width="11" height="1" fill="#7868a8"/><rect x="330" y="45" width="11" height="1" fill="#68a068"/><rect x="341" y="45" width="120" height="1" fill="#a870a0"/><rect x="461" y="45" width="15" height="1" fill="#60a098"/><rect x="476" y="45" width="5" height="1" fill="#a870a0"/><rect x="0" y="46" width="86" height="1" fill="#a868a0"/><rect x="86" y="46" width="20" height="1" fill="#6878a0"/><rect x="106" y="46" width="21" height="1" fill="#60a098"/><rect x="127" y="46" width="48" height="1" fill="#7868a8"/><rect x="175" y="46" width="10" height="1" fill="#60a098"/><rect x="185" y="46" width="12" height="1" fill="#60a098"/><rect x="197" y="46" width="24" height="1" fill="#7868a8"/><rect x="221" y="46" width="12" height="1" fill="#a86868"/><rect x="233" y="46" width="44" height="1" fill="#a86868"/><rect x="277" y="46" width="58" height="1" fill="#7868a8"/><rect x="335" y="46" width="87" height="1" fill="#60a098"/><rect x="422" y="46" width="37" height="1" fill="#6878a0"/><rect x="459" y="46" width="9" height="1" fill="#68a068"/><rect x="468" y="46" width="13" height="1" fill="#60a098"/><rect x="0" y="47" width="86" height="1" fill="#a09868"/><rect x="86" y="47" width="20" height="1" fill="#6878a0"/><rect x="106" y="47" width="21" height="1" fill="#a0a070"/><rect x="127" y="47" width="48" height="1" fill="#a870a0"/><rect x="175" y="47" width="10" height="1" fill="#60a098"/><rect x="185" y="47" width="12" height="1" fill="#60a098"/><rect x="197" y="47" width="24" height="1" fill="#7868a8"/><rect x="221" y="47" width="12" height="1" fill="#a09868"/><rect x="233" y="47" width="44" height="1" fill="#a86868"/><rect x="277" y="47" width="58" height="1" fill="#7868a8"/><rect x="335" y="47" width="87" height="1" fill="#a09868"/><rect x="422" y="47" width="37" height="1" fill="#6878a0"/><rect x="459" y="47" width="9" height="1" fill="#68a068"/><rect x="468" y="47" width="13" height="1" fill="#60a098"/><rect x="0" y="48" width="86" height="1" fill="#a09868"/><rect x="86" y="48" width="20" height="1" fill="#6878a0"/><rect x="106" y="48" width="21" height="1" fill="#a870a0"/><rect x="127" y="48" width="48" height="1" fill="#a0a070"/><rect x="175" y="48" width="10" height="1" fill="#60a098"/><rect x="185" y="48" width="12" height="1" fill="#7868a8"/><rect x="197" y="48" width="24" height="1" fill="#7868a8"/><rect x="221" y="48" width="12" height="1" fill="#a09868"/><rect x="233" y="48" width="44" height="1" fill="#a86868"/><rect x="277" y="48" width="58" height="1" fill="#7868a8"/><rect x="335" y="48" width="87" height="1" fill="#a09868"/><rect x="422" y="48" width="37" height="1" fill="#98a070"/><rect x="459" y="48" width="9" height="1" fill="#60a098"/><rect x="468" y="48" width="13" height="1" fill="#60a098"/><rect x="0" y="49" width="86" height="1" fill="#98a070"/><rect x="86" y="49" width="20" height="1" fill="#a868a0"/><rect x="106" y="49" width="21" height="1" fill="#a870a0"/><rect x="127" y="49" width="48" height="1" fill="#a0a070"/><rect x="175" y="49" width="10" height="1" fill="#60a098"/><rect x="185" y="49" width="12" height="1" fill="#60a098"/><rect x="197" y="49" width="24" height="1" fill="#7868a8"/><rect x="221" y="49" width="12" height="1" fill="#a09868"/><rect x="233" y="49" width="44" height="1" fill="#a86868"/><rect x="277" y="49" width="58" height="1" fill="#7868a8"/><rect x="335" y="49" width="87" height="1" fill="#a868a0"/><rect x="422" y="49" width="37" height="1" fill="#98a070"/><rect x="459" y="49" width="9" height="1" fill="#60a098"/><rect x="468" y="49" width="13" height="1" fill="#60a098"/><rect x="0" y="50" width="35" height="1" fill="#68a068"/><rect x="35" y="50" width="13" height="1" fill="#7868a8"/><rect x="48" y="50" width="9" height="1" fill="#a870a0"/><rect x="57" y="50" width="53" height="1" fill="#a86868"/><rect x="110" y="50" width="15" height="1" fill="#98a070"/><rect x="125" y="50" width="37" height="1" fill="#a0a070"/><rect x="162" y="50" width="10" height="1" fill="#a868a0"/><rect x="172" y="50" width="32" height="1" fill="#6878a0"/><rect x="204" y="50" width="34" height="1" fill="#a868a0"/><rect x="238" y="50" width="87" height="1" fill="#7868a8"/><rect x="325" y="50" width="11" height="1" fill="#7868a8"/><rect x="336" y="50" width="6" height="1" fill="#98a070"/><rect x="342" y="50" width="15" height="1" fill="#68a068"/><rect x="357" y="50" width="11" height="1" fill="#a868a0"/><rect x="368" y="50" width="33" height="1" fill="#7868a8"/><rect x="401" y="50" width="30" height="1" fill="#a0a070"/><rect x="431" y="50" width="6" height="1" fill="#a86868"/><rect x="437" y="50" width="4" height="1" fill="#68a068"/><rect x="441" y="50" width="40" height="1" fill="#a0a070"/><rect x="0" y="51" width="13" height="1" fill="#60a098"/><rect x="13" y="51" width="11" height="1" fill="#60a098"/><rect x="24" y="51" width="89" height="1" fill="#6878a0"/><rect x="113" y="51" width="32" height="1" fill="#6878a0"/><rect x="145" y="51" width="106" height="1" fill="#a0a070"/><rect x="251" y="51" width="22" height="1" fill="#a86868"/><rect x="273" y="51" width="72" height="1" fill="#6878a0"/><rect x="345" y="51" width="35" height="1" fill="#a0a070"/><rect x="380" y="51" width="3" height="1" fill="#a870a0"/><rect x="383" y="51" width="84" height="1" fill="#a870a0"/><rect x="467" y="51" width="14" height="1" fill="#60a098"/></svg>
<div class="a" style="left:545px;top:79px;width:8px;height:338px;background:#fff"></div>
<div class="a" style="left:545px;top:238px;width:8px;height:171px;background:#c0c0c0"></div>
<div class="t" style="left:45.7px;top:94px;color:#000080">14:08:23</div>
<div class="t" style="left:141.7px;top:94px;color:#000080">Screen Control Application Development System</div>
<div class="t" style="left:447.7px;top:94px;color:#000080">20 SEP 2001</div>
<div class="t" style="left:435.7px;top:107px;color:#000080">Clerk: A WISL</div>
<div class="t" style="left:171.7px;top:119px;color:#000080">Add/Maintain Help Information - HLP</div>
<div class="a" style="left:43px;top:86px;width:1px;height:38px;background:#000080"></div>
<div class="a" style="left:43px;top:138px;width:1px;height:170px;background:#fff"></div>
<div class="a" style="left:43px;top:307px;width:475px;height:1px;background:#fff"></div>
<div class="t" style="left:45.7px;top:133px;color:#fff">LN#   Help Message Text</div>
<div class="t" style="left:45.7px;top:146px;color:#fff">  1  Le niveau de service specifie les 'rate quotes' qui correspondent</div>
<div class="t" style="left:45.7px;top:159px;color:#fff">  2  au type de service desire pour ce livraison.</div>
<div class="t" style="left:45.7px;top:172px;color:#fff">  3  Les 'Rate Quotes' qui n'ont aucun niveau de service specifique</div>
<div class="t" style="left:45.7px;top:185px;color:#fff">  4  seront consideres dans tous les cherches a tous les niveaux.</div>
<div class="t" style="left:45.7px;top:198px;color:#fff">  5</div>
<div class="t" style="left:45.7px;top:211px;color:#fff">  6  Dans l'enquete de taux. le format du niveau de service est:</div>
<div class="t" style="left:45.7px;top:224px;color:#fff">  7            NAA</div>
<div class="t" style="left:45.7px;top:237px;color:#fff">  8     N   - represente le niveau NUMERIQUE</div>
<div class="t" style="left:45.7px;top:250px;color:#fff">  9     AA   - sera une des codes suivants:</div>
<div class="t" style="left:45.7px;top:263px;color:#fff"> 10                    EQ - trouve niveaux EGAL au niveau specifie</div>
<div class="t" style="left:45.7px;top:276px;color:#fff"> 11                    GT - trouve niveaux              GRAND</div>
<div class="t" style="left:45.7px;top:289px;color:#fff"> 12                    LT - trouve niveaux</div>
<div class="t" style="left:45.7px;top:316px;color:#fff">1. Text :</div>
<div class="t" style="left:45.7px;top:329px;color:#fff">Dans l'enquete de taux, le format du niveau de service est:</div>
<div class="t" style="left:45.7px;top:367px;color:#00ffff">xxxxxxxxxxxxxxxxxxxxxxxxxxxxxxxxxxxMxxxxxxxxxxxxxxxxxxxxxxxxxxxxx 1. Text</div>
<div class="a" style="left:40px;top:379px;width:6px;height:13px;background:#00ffff"></div>
<div class="a" style="left:46px;top:379px;width:6px;height:13px;background:#ffff00"></div>
<div class="t" style="left:41.5px;top:381px;color:#000080">?</div>
<div class="a" style="left:40px;top:392px;width:54px;height:13px;background:#fff"></div>
<div class="t" style="left:41px;top:394px;color:#000080">\</div>
<div class="a" style="left:100px;top:392px;width:54px;height:13px;background:#fff"></div>
<div class="t" style="left:101px;top:394px;color:#000080">\G</div>
<div class="a" style="left:160px;top:392px;width:54px;height:13px;background:#fff"></div>
<div class="t" style="left:161px;top:394px;color:#000080">SRT</div>
<div class="a" style="left:220px;top:392px;width:54px;height:13px;background:#fff"></div>
<div class="t" style="left:221px;top:394px;color:#000080">\4</div>
<div class="a" style="left:286px;top:392px;width:55px;height:13px;background:#fff"></div>
<div class="t" style="left:287px;top:394px;color:#000080">\0</div>
<div class="a" style="left:347px;top:392px;width:54px;height:13px;background:#fff"></div>
<div class="t" style="left:348px;top:394px;color:#000080">:U</div>
<div class="a" style="left:40px;top:417px;width:512px;height:12px;background:#c0c0c0"></div>
<div class="a" style="left:51px;top:47px;font-size:6px;line-height:6px;color:#fff;letter-spacing:0.3px;-webkit-text-stroke:0.2px #fff">Screen Control    [SCREEN [A]]</div>
<svg class="a" style="left:0;top:0" width="600" height="70"><rect x="527" y="46" width="7" height="7" fill="#c8c8c8"/><rect x="529" y="51" width="4" height="2" fill="#000"/><rect x="534" y="46" width="1" height="7" fill="#000"/><rect x="535" y="46" width="7" height="7" fill="#c8c8c8"/><path d="M537.5 47.5h3M537 47v5M537 49.5h2M536.5 52h3.5" stroke="#000" stroke-width="1.2" fill="none"/><rect x="542" y="46" width="1" height="7" fill="#000"/><rect x="544" y="46" width="7" height="7" fill="#c8c8c8"/><path d="M546 48l3 3M549 48l-3 3" stroke="#000" stroke-width="1.2" fill="none"/><rect x="551" y="46" width="1" height="7" fill="#000"/><rect x="527" y="56" width="7" height="7" fill="#c8c8c8"/><rect x="529" y="61" width="4" height="2" fill="#000"/><rect x="534" y="56" width="1" height="7" fill="#000"/><rect x="535" y="56" width="7" height="7" fill="#c8c8c8"/><path d="M537.5 57.5h3M537 57v5M537 59.5h2M536.5 62h3.5" stroke="#000" stroke-width="1.2" fill="none"/><rect x="542" y="56" width="1" height="7" fill="#000"/><rect x="544" y="56" width="7" height="7" fill="#c8c8c8"/><path d="M546 58l3 3M549 58l-3 3" stroke="#000" stroke-width="1.2" fill="none"/><rect x="551" y="56" width="1" height="7" fill="#000"/></svg>
<svg class="a" style="left:41px;top:55px" width="9" height="9"><rect x="0" y="0" width="9" height="4" fill="#000080"/><rect x="1" y="1" width="2" height="2" fill="#fff"/><rect x="5" y="1" width="2" height="2" fill="#fff"/><rect x="0" y="5" width="9" height="3" fill="#e0e0e0"/><rect x="1" y="6" width="4" height="1" fill="#000080"/></svg>
<div class="a" style="left:52px;top:56px;font:7.5px/9px Liberation Sans;color:#000;letter-spacing:0.2px;-webkit-text-stroke:0.35px;transform:scaleX(0.72);transform-origin:0 0">File</div>
<div class="a" style="left:65px;top:56px;font:7.5px/9px Liberation Sans;color:#000;letter-spacing:0.2px;-webkit-text-stroke:0.35px;transform:scaleX(0.72);transform-origin:0 0">Edit</div>
<div class="a" style="left:79px;top:56px;font:7.5px/9px Liberation Sans;color:#000;letter-spacing:0.2px;-webkit-text-stroke:0.35px;transform:scaleX(0.72);transform-origin:0 0">View</div>
<div class="a" style="left:95px;top:56px;font:7.5px/9px Liberation Sans;color:#000;letter-spacing:0.2px;-webkit-text-stroke:0.35px;transform:scaleX(0.72);transform-origin:0 0">Tools</div>
<div class="a" style="left:113px;top:56px;font:7.5px/9px Liberation Sans;color:#000;letter-spacing:0.2px;-webkit-text-stroke:0.35px;transform:scaleX(0.72);transform-origin:0 0">Reset</div>
<div class="a" style="left:132px;top:56px;font:7.5px/9px Liberation Sans;color:#000;letter-spacing:0.2px;-webkit-text-stroke:0.35px;transform:scaleX(0.72);transform-origin:0 0">Window</div>
<div class="a" style="left:157px;top:56px;font:7.5px/9px Liberation Sans;color:#000;letter-spacing:0.2px;-webkit-text-stroke:0.35px;transform:scaleX(0.72);transform-origin:0 0">Help</div>
<div class="a" style="left:41px;top:67px;width:1px;height:11px;background:#fff"></div><div class="a" style="left:40px;top:67px;width:1px;height:11px;background:#808080"></div>
<div class="a" style="left:64px;top:67px;width:1px;height:11px;background:#fff"></div><div class="a" style="left:63px;top:67px;width:1px;height:11px;background:#808080"></div>
<div class="a" style="left:78px;top:67px;width:1px;height:11px;background:#fff"></div><div class="a" style="left:77px;top:67px;width:1px;height:11px;background:#808080"></div>
<div class="a" style="left:92px;top:67px;width:1px;height:11px;background:#fff"></div><div class="a" style="left:91px;top:67px;width:1px;height:11px;background:#808080"></div>
<div class="a" style="left:106px;top:67px;width:1px;height:11px;background:#fff"></div><div class="a" style="left:105px;top:67px;width:1px;height:11px;background:#808080"></div>
<div class="a" style="left:132px;top:67px;width:1px;height:11px;background:#fff"></div><div class="a" style="left:131px;top:67px;width:1px;height:11px;background:#808080"></div>
<div class="a" style="left:169px;top:67px;width:1px;height:11px;background:#fff"></div><div class="a" style="left:168px;top:67px;width:1px;height:11px;background:#808080"></div>
<div class="a" style="left:183px;top:67px;width:1px;height:11px;background:#fff"></div><div class="a" style="left:182px;top:67px;width:1px;height:11px;background:#808080"></div>
<div class="a" style="left:228px;top:67px;width:1px;height:11px;background:#fff"></div><div class="a" style="left:227px;top:67px;width:1px;height:11px;background:#808080"></div>
<div class="a" style="left:254px;top:67px;width:1px;height:11px;background:#fff"></div><div class="a" style="left:253px;top:67px;width:1px;height:11px;background:#808080"></div>
<svg class="a" style="left:43px;top:69px" width="10" height="9"><rect x="0" y="0" width="6" height="8" fill="#000"/><rect x="1" y="1" width="4" height="6" fill="#fff"/></svg>
<svg class="a" style="left:53px;top:69px" width="10" height="9"><rect x="0" y="2" width="8" height="6" fill="#000"/><rect x="1" y="3" width="7" height="4" fill="#ffff00"/><rect x="4" y="0" width="3" height="1" fill="#000"/><rect x="6" y="1" width="1" height="2" fill="#000"/></svg>
<svg class="a" style="left:67px;top:69px" width="10" height="9"><rect x="0" y="0" width="8" height="8" fill="#000"/><rect x="1" y="1" width="6" height="3" fill="#808080"/><rect x="1" y="5" width="6" height="2" fill="#ffff00"/><rect x="2" y="5" width="4" height="2" fill="#000"/><rect x="3" y="5" width="2" height="1" fill="#ffff00"/></svg>
<svg class="a" style="left:81px;top:69px" width="10" height="9"><rect x="2" y="0" width="5" height="3" fill="#000"/><rect x="0" y="3" width="9" height="4" fill="#000"/><rect x="2" y="5" width="5" height="2" fill="#ffff00"/><rect x="3" y="7" width="3" height="1" fill="#000"/></svg>
<svg class="a" style="left:96px;top:69px" width="10" height="9"><rect x="1" y="0" width="7" height="7" fill="#808080"/><rect x="0" y="2" width="9" height="3" fill="#808080"/><rect x="2" y="7" width="5" height="1" fill="#fff"/></svg>
<svg class="a" style="left:109px;top:69px" width="10" height="9"><rect x="0" y="0" width="4" height="2" fill="#000"/><rect x="3" y="1" width="1" height="3" fill="#000"/><rect x="4" y="3" width="3" height="4" fill="#000"/><rect x="3" y="7" width="5" height="1" fill="#0000ff"/></svg>
<svg class="a" style="left:120px;top:69px" width="10" height="9"><rect x="2" y="0" width="5" height="2" fill="#808080"/><rect x="0" y="2" width="9" height="3" fill="#80a080"/><rect x="1" y="5" width="8" height="3" fill="#fff"/><rect x="0" y="3" width="2" height="4" fill="#a080a0"/></svg>
<svg class="a" style="left:135px;top:69px" width="10" height="9"><rect x="0" y="2" width="8" height="6" fill="#000"/><rect x="1" y="3" width="6" height="4" fill="#ffff00"/><rect x="4" y="0" width="3" height="2" fill="#0000ff"/><rect x="2" y="2" width="3" height="3" fill="#0000ff"/></svg>
<svg class="a" style="left:146px;top:69px" width="10" height="9"><rect x="0" y="0" width="8" height="2" fill="#000"/><rect x="0" y="2" width="8" height="6" fill="#000"/><rect x="1" y="3" width="6" height="4" fill="#ffff00"/><rect x="3" y="3" width="2" height="2" fill="#0000ff"/><rect x="5" y="5" width="2" height="2" fill="#0000ff"/></svg>
<svg class="a" style="left:157px;top:69px" width="10" height="9"><rect x="0" y="2" width="8" height="6" fill="#000"/><rect x="1" y="3" width="6" height="4" fill="#0000ff"/><rect x="1" y="0" width="2" height="2" fill="#ff0000"/><rect x="3" y="2" width="2" height="2" fill="#ff0000"/><rect x="4" y="4" width="2" height="2" fill="#fff"/></svg>
<svg class="a" style="left:171px;top:69px" width="10" height="9"><rect x="1" y="0" width="6" height="4" fill="#000"/><rect x="2" y="1" width="4" height="2" fill="#0000ff"/><rect x="0" y="4" width="9" height="3" fill="#00ffff"/><rect x="2" y="5" width="5" height="1" fill="#000"/><rect x="0" y="7" width="9" height="1" fill="#000"/></svg>
<svg class="a" style="left:185px;top:69px" width="10" height="9"><rect x="0" y="0" width="2" height="2" fill="#ff0000"/><rect x="6" y="0" width="2" height="2" fill="#ff0000"/><rect x="1" y="2" width="6" height="5" fill="#000"/><rect x="2" y="3" width="4" height="2" fill="#00ffff"/><rect x="0" y="7" width="8" height="1" fill="#000"/></svg>
<svg class="a" style="left:197px;top:69px" width="10" height="9"><rect x="1" y="0" width="6" height="8" fill="#a0a0a0"/><rect x="2" y="1" width="4" height="2" fill="#fff"/><rect x="2" y="4" width="4" height="3" fill="#909090"/></svg>
<svg class="a" style="left:207px;top:69px" width="10" height="9"><rect x="2" y="0" width="4" height="3" fill="#000"/><rect x="0" y="3" width="8" height="5" fill="#000"/><rect x="2" y="4" width="3" height="3" fill="#008000"/><rect x="5" y="2" width="2" height="2" fill="#fff"/></svg>
<svg class="a" style="left:218px;top:69px" width="10" height="9"><rect x="2" y="0" width="4" height="3" fill="#a0a0a0"/><rect x="0" y="3" width="8" height="5" fill="#a0a0a0"/><rect x="2" y="4" width="4" height="3" fill="#fff"/></svg>
<svg class="a" style="left:231px;top:69px" width="10" height="9"><rect x="0" y="0" width="2" height="5" fill="#ff0000"/><rect x="0" y="6" width="2" height="2" fill="#ff0000"/><rect x="3" y="1" width="6" height="5" fill="#000"/><rect x="4" y="2" width="4" height="3" fill="#0000ff"/><rect x="3" y="7" width="6" height="1" fill="#0000ff"/></svg>
<svg class="a" style="left:242px;top:69px" width="10" height="9"><rect x="0" y="2" width="3" height="6" fill="#800000"/><rect x="3" y="0" width="2" height="2" fill="#ff0000"/><rect x="5" y="2" width="2" height="2" fill="#ff0000"/><rect x="6" y="4" width="2" height="3" fill="#ff0000"/><rect x="2" y="1" width="2" height="2" fill="#000"/></svg>
<svg class="a" style="left:258px;top:69px" width="10" height="9"><rect x="1" y="0" width="5" height="2" fill="#000"/><rect x="2" y="1" width="3" height="1" fill="#ffff00"/><rect x="4" y="2" width="2" height="3" fill="#000"/><rect x="5" y="2" width="1" height="2" fill="#ffff00"/><rect x="2" y="5" width="2" height="1" fill="#000"/><rect x="2" y="7" width="2" height="1" fill="#000"/></svg>
<div class="a" style="left:95px;top:418px;width:1px;height:10px;background:#808080"></div><div class="a" style="left:96px;top:418px;width:1px;height:10px;background:#fff"></div>
<div class="a" style="left:131px;top:418px;width:1px;height:10px;background:#808080"></div><div class="a" style="left:132px;top:418px;width:1px;height:10px;background:#fff"></div>
<div class="a" style="left:168px;top:418px;width:1px;height:10px;background:#808080"></div><div class="a" style="left:169px;top:418px;width:1px;height:10px;background:#fff"></div>
<div class="a" style="left:195px;top:418px;width:1px;height:10px;background:#808080"></div><div class="a" style="left:196px;top:418px;width:1px;height:10px;background:#fff"></div>
<div class="a" style="left:240px;top:418px;width:1px;height:10px;background:#808080"></div><div class="a" style="left:241px;top:418px;width:1px;height:10px;background:#fff"></div>
<div class="a" style="left:274px;top:418px;width:1px;height:10px;background:#808080"></div><div class="a" style="left:275px;top:418px;width:1px;height:10px;background:#fff"></div>
<svg class="a" style="left:55px;top:420px" width="9" height="8"><rect x="0" y="0" width="6" height="5" fill="#000"/><rect x="1" y="1" width="4" height="3" fill="#0000ff"/><rect x="1" y="5" width="4" height="1" fill="#808080"/></svg>
<div class="a" style="left:64px;top:419px;font:6px/8px Liberation Sans;color:#000;-webkit-text-stroke:0.25px">2:04</div>
<svg class="a" style="left:100px;top:420px" width="9" height="8"><rect x="0" y="0" width="6" height="5" fill="#000"/><rect x="1" y="1" width="4" height="3" fill="#0000ff"/><rect x="1" y="5" width="4" height="1" fill="#808080"/></svg>
<div class="a" style="left:109px;top:419px;font:6px/8px Liberation Sans;color:#000;-webkit-text-stroke:0.25px">00:24:1</div>
<svg class="a" style="left:136px;top:420px" width="9" height="8"><rect x="0" y="0" width="7" height="6" fill="#000"/><rect x="1" y="1" width="5" height="4" fill="#0000ff"/><rect x="2" y="6" width="3" height="1" fill="#ffff00"/></svg>
<div class="a" style="left:145px;top:419px;font:6px/8px Liberation Sans;color:#000;-webkit-text-stroke:0.25px">mvw 60</div>
<svg class="a" style="left:172px;top:420px" width="9" height="8"><rect x="2" y="0" width="4" height="2" fill="#000"/><rect x="0" y="2" width="8" height="3" fill="#000"/><rect x="1" y="3" width="6" height="1" fill="#fff"/><rect x="1" y="5" width="6" height="1" fill="#808080"/></svg>
<div class="a" style="left:183px;top:419px;font:6px/8px Liberation Sans;color:#000;-webkit-text-stroke:0.25px">cls</div>
<svg class="a" style="left:199px;top:420px" width="9" height="8"><rect x="0" y="0" width="3" height="3" fill="#ffff00"/><rect x="2" y="2" width="3" height="3" fill="#ff0000"/><rect x="4" y="4" width="3" height="2" fill="#ffff00"/></svg>
<div class="a" style="left:208px;top:419px;font:6px/8px Liberation Sans;color:#000;-webkit-text-stroke:0.25px">Capture On</div>
<svg class="a" style="left:244px;top:420px" width="9" height="8"><rect x="4" y="0" width="3" height="2" fill="#808080"/><rect x="0" y="2" width="7" height="3" fill="#606060"/><rect x="1" y="5" width="5" height="1" fill="#a080c0"/></svg>
<div class="a" style="left:253px;top:419px;font:6px/8px Liberation Sans;color:#000;-webkit-text-stroke:0.25px">Telnet</div>
<svg class="a" style="left:280px;top:420px" width="9" height="8"><rect x="0" y="0" width="2" height="2" fill="#ff0000"/><rect x="2" y="2" width="2" height="2" fill="#ff0000"/><rect x="1" y="5" width="2" height="2" fill="#ff0000"/></svg>
<div class="a" style="left:289px;top:419px;font:6px/8px Liberation Sans;color:#000;-webkit-text-stroke:0.25px">connected to MVS 08</div>
<div class="a" style="left:545px;top:79px;width:8px;height:8px;background:#c0c0c0;border-right:1px solid #000;border-bottom:1px solid #404040"></div><div class="a" style="left:546px;top:82px;width:0;height:0;border-left:3px solid transparent;border-right:3px solid transparent;border-bottom:3px solid #000"></div>
<div class="a" style="left:552px;top:401px;width:1px;height:16px;background:#000"></div><div class="a" style="left:545px;top:409px;width:7px;height:8px;background:#c0c0c0;border-bottom:1px solid #404040;border-top:1px solid #fff"></div><div class="a" style="left:546px;top:412px;width:0;height:0;border-left:3px solid transparent;border-right:3px solid transparent;border-top:3px solid #000"></div>
<div class="a" style="left:28px;top:20px;width:223px;height:30px;background:#000"></div>
<div class="a" style="left:20px;top:15px;width:223px;height:30px;background:#929292"></div>
<div class="a" style="left:50px;top:19px;font-size:20.3px;line-height:22px;color:#111">OL Demonstration</div>
<div class="a" style="left:193px;top:279px;width:195px;height:50px;background:#800010;border-radius:3px"></div>
<div class="a" style="left:191px;top:276px;width:195px;height:50px;background:#ffff00;border-radius:3px"></div>
<div class="a" style="left:216px;top:293px;font-size:11.75px;line-height:14px;color:#000;white-space:nowrap">The text is maintained by line.</div>
<div class="a" style="left:405px;top:385px;width:147px;height:21px;background:linear-gradient(90deg,#003830 5%,#00b0a0 90%);border:1px solid #40d8c8;border-bottom-color:#20a090;border-right-color:#20a090;color:#fff;font-weight:bold;font-size:12px;line-height:19px;text-align:center;padding-left:1px">Left Click to Continue</div>
<svg class="a" style="left:0;top:431px" width="600" height="14"><rect x="11" y="0" width="2" height="14" fill="#706868"/><rect x="15" y="0" width="2" height="14" fill="#706868"/><rect x="19" y="0" width="2" height="14" fill="#706868"/><rect x="24" y="0" width="2" height="14" fill="#706868"/><rect x="28" y="0" width="2" height="14" fill="#706868"/><rect x="32" y="0" width="2" height="14" fill="#706868"/><rect x="36" y="0" width="2" height="14" fill="#706868"/><rect x="40" y="0" width="2" height="14" fill="#706868"/><rect x="44" y="0" width="2" height="14" fill="#706868"/><rect x="49" y="0" width="2" height="14" fill="#706868"/><rect x="53" y="0" width="2" height="14" fill="#706868"/><rect x="57" y="0" width="2" height="14" fill="#706868"/><rect x="61" y="0" width="2" height="14" fill="#706868"/><rect x="65" y="0" width="2" height="14" fill="#706868"/><rect x="69" y="0" width="2" height="14" fill="#706868"/><rect x="74" y="0" width="2" height="14" fill="#706868"/><rect x="78" y="0" width="2" height="14" fill="#706868"/><rect x="82" y="0" width="2" height="14" fill="#706868"/><rect x="86" y="0" width="2" height="14" fill="#706868"/><rect x="90" y="0" width="2" height="14" fill="#706868"/><rect x="94" y="0" width="2" height="14" fill="#706868"/><rect x="99" y="0" width="2" height="14" fill="#706868"/><rect x="103" y="0" width="2" height="14" fill="#706868"/><rect x="107" y="0" width="2" height="14" fill="#706868"/><rect x="111" y="0" width="2" height="14" fill="#706868"/><rect x="115" y="0" width="2" height="14" fill="#706868"/><rect x="119" y="0" width="2" height="14" fill="#706868"/><rect x="124" y="0" width="2" height="14" fill="#706868"/><rect x="128" y="0" width="2" height="14" fill="#706868"/><rect x="132" y="0" width="2" height="14" fill="#706868"/><rect x="136" y="0" width="2" height="14" fill="#706868"/><rect x="140" y="0" width="2" height="14" fill="#706868"/><rect x="144" y="0" width="2" height="14" fill="#706868"/><rect x="149" y="0" width="2" height="14" fill="#706868"/><rect x="153" y="0" width="2" height="14" fill="#706868"/><rect x="157" y="0" width="2" height="14" fill="#706868"/><rect x="161" y="0" width="2" height="14" fill="#706868"/><rect x="165" y="0" width="2" height="14" fill="#706868"/><rect x="169" y="0" width="2" height="14" fill="#706868"/><rect x="174" y="0" width="2" height="14" fill="#706868"/><rect x="178" y="0" width="2" height="14" fill="#706868"/><rect x="182" y="0" width="2" height="14" fill="#706868"/><rect x="186" y="0" width="2" height="14" fill="#706868"/><rect x="190" y="0" width="2" height="14" fill="#706868"/><rect x="194" y="0" width="2" height="14" fill="#706868"/><rect x="199" y="0" width="2" height="14" fill="#706868"/><rect x="203" y="0" width="2" height="14" fill="#706868"/><rect x="207" y="0" width="2" height="14" fill="#706868"/><rect x="211" y="0" width="2" height="14" fill="#706868"/><rect x="215" y="0" width="2" height="14" fill="#706868"/><rect x="220" y="0" width="2" height="14" fill="#706868"/><rect x="224" y="0" width="2" height="14" fill="#706868"/><rect x="228" y="0" width="2" height="14" fill="#706868"/><rect x="232" y="0" width="2" height="14" fill="#706868"/><rect x="236" y="0" width="2" height="14" fill="#706868"/><rect x="240" y="0" width="2" height="14" fill="#706868"/><rect x="245" y="0" width="2" height="14" fill="#706868"/><rect x="249" y="0" width="2" height="14" fill="#706868"/><rect x="253" y="0" width="2" height="14" fill="#706868"/><rect x="257" y="0" width="2" height="14" fill="#706868"/><rect x="261" y="0" width="2" height="14" fill="#706868"/><rect x="265" y="0" width="2" height="14" fill="#706868"/><rect x="270" y="0" width="2" height="14" fill="#706868"/><rect x="274" y="0" width="2" height="14" fill="#706868"/><rect x="278" y="0" width="2" height="14" fill="#706868"/><rect x="282" y="0" width="2" height="14" fill="#706868"/><rect x="286" y="0" width="2" height="14" fill="#706868"/><rect x="290" y="0" width="2" height="14" fill="#706868"/><rect x="295" y="0" width="2" height="14" fill="#706868"/><rect x="299" y="0" width="2" height="14" fill="#706868"/><rect x="303" y="0" width="2" height="14" fill="#706868"/><rect x="307" y="0" width="2" height="14" fill="#706868"/><rect x="311" y="0" width="2" height="14" fill="#706868"/><rect x="315" y="0" width="2" height="14" fill="#706868"/><rect x="320" y="0" width="2" height="14" fill="#706868"/><rect x="324" y="0" width="2" height="14" fill="#706868"/><rect x="328" y="0" width="2" height="14" fill="#706868"/><rect x="332" y="0" width="2" height="14" fill="#706868"/><rect x="336" y="0" width="2" height="14" fill="#706868"/><rect x="340" y="0" width="2" height="14" fill="#706868"/><rect x="345" y="0" width="2" height="14" fill="#706868"/><rect x="349" y="0" width="2" height="14" fill="#706868"/><rect x="353" y="0" width="2" height="14" fill="#706868"/><rect x="357" y="0" width="2" height="14" fill="#706868"/><rect x="361" y="0" width="2" height="14" fill="#706868"/><rect x="365" y="0" width="2" height="14" fill="#706868"/><rect x="370" y="0" width="2" height="14" fill="#706868"/><rect x="374" y="0" width="2" height="14" fill="#706868"/><rect x="378" y="0" width="2" height="14" fill="#706868"/><rect x="382" y="0" width="2" height="14" fill="#706868"/><rect x="386" y="0" width="2" height="14" fill="#706868"/><rect x="390" y="0" width="2" height="14" fill="#706868"/><rect x="395" y="0" width="2" height="14" fill="#706868"/><rect x="399" y="0" width="2" height="14" fill="#706868"/><rect x="403" y="0" width="2" height="14" fill="#706868"/><rect x="407" y="0" width="2" height="14" fill="#706868"/><rect x="411" y="0" width="2" height="14" fill="#706868"/><rect x="415" y="0" width="2" height="14" fill="#706868"/><rect x="420" y="0" width="2" height="14" fill="#706868"/><rect x="424" y="0" width="2" height="14" fill="#706868"/><rect x="428" y="0" width="2" height="14" fill="#706868"/><rect x="432" y="0" width="2" height="14" fill="#706868"/><rect x="436" y="0" width="2" height="14" fill="#706868"/><rect x="441" y="0" width="2" height="14" fill="#706868"/><rect x="445" y="0" width="2" height="14" fill="#706868"/><rect x="449" y="0" width="2" height="14" fill="#706868"/><rect x="453" y="0" width="2" height="14" fill="#706868"/><rect x="512" y="0" width="2" height="14" fill="#706868"/><rect x="516" y="0" width="2" height="14" fill="#706868"/><rect x="520" y="0" width="2" height="14" fill="#706868"/><rect x="525" y="0" width="2" height="14" fill="#706868"/><rect x="529" y="0" width="2" height="14" fill="#706868"/><rect x="533" y="0" width="2" height="14" fill="#706868"/><rect x="537" y="0" width="2" height="14" fill="#706868"/><rect x="541" y="0" width="2" height="14" fill="#706868"/><rect x="545" y="0" width="2" height="14" fill="#706868"/><rect x="550" y="0" width="2" height="14" fill="#706868"/><rect x="554" y="0" width="2" height="14" fill="#706868"/><rect x="558" y="0" width="2" height="14" fill="#706868"/></svg>
<div class="a" style="left:465px;top:428px;font-size:15px;line-height:16px;color:#706868;letter-spacing:0.3px;-webkit-text-stroke:0.3px #706868">WISL</div>
<div class="a" style="left:569px;top:428px;font-size:15px;line-height:16px;color:#706868;-webkit-text-stroke:0.5px #706868">46</div>
</body></html>
